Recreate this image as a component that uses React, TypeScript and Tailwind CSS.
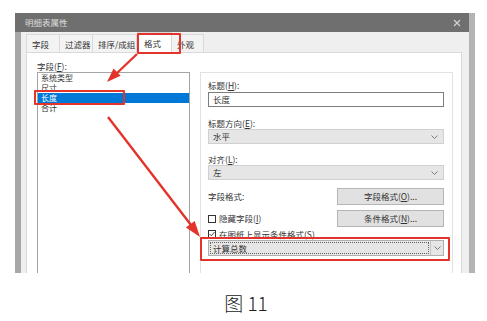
import type { ReactNode } from 'react';

function Chevron() {
  return (
    <svg width="7" height="4" viewBox="0 0 7 4" className="shrink-0">
      <path d="M0.5 0.5 L3.5 3.5 L6.5 0.5" fill="none" stroke="#7a7a7a" strokeWidth="1" />
    </svg>
  );
}

function Select({ value }: { value: string }) {
  return (
    <div className="h-[15px] border border-[#d0d0d0] bg-[#e6e6e6] flex items-center justify-between pl-[4px] pr-[5px]">
      <span>{value}</span>
      <Chevron />
    </div>
  );
}

function Label({ children }: { children: ReactNode }) {
  return <div className="h-[12px] leading-[12px]">{children}</div>;
}

function Button({ children }: { children: ReactNode }) {
  return (
    <div className="w-[107px] h-[17px] border border-[#b5b5b5] bg-[#e1e1e1] flex items-center justify-center">
      {children}
    </div>
  );
}

function Checkbox({ checked }: { checked?: boolean }) {
  return (
    <div className="w-[8px] h-[8px] border border-[#333] bg-white flex items-center justify-center mr-[3px]">
      {checked && (
        <svg width="6" height="6" viewBox="0 0 6 6">
          <path d="M0.5 3 L2.3 4.8 L5.5 1" fill="none" stroke="#333" strokeWidth="0.9" />
        </svg>
      )}
    </div>
  );
}

const tabs = [
  { label: '字段', w: 'w-[34px]' },
  { label: '过滤器', w: 'w-[33px]' },
  { label: '排序/成组', w: 'w-[44px]' },
  { label: '格式', w: 'w-[35px]', active: true },
  { label: '外观', w: 'w-[32px]' },
];

const fields = ['系统类型', '尺寸', '长度', '合计'];

export default function App() {
  return (
    <div className="relative w-[487px] h-[321px] bg-white overflow-hidden text-[8.5px] text-[#333] font-['Noto_Sans_CJK_SC','Noto_Sans',sans-serif]">
      {/* Dialog */}
      <div className="ml-[15px] mt-[13px] w-[460px] h-[260px] flex">
        <div className="w-[454px] flex flex-col">
          {/* Title bar */}
          <div className="h-[19px] bg-[#6f6f6f] flex items-center justify-between pl-[10px] pr-[8px] text-[#dedede]">
            <span>明细表属性</span>
            <svg width="8" height="8" viewBox="0 0 8 8">
              <path d="M1 1 L7 7 M7 1 L1 7" stroke="#d6d6d6" strokeWidth="1.1" />
            </svg>
          </div>
          <div className="flex-1 flex">
            <div className="w-[6px] bg-[#a7a7a7]" />
            <div className="flex-1 bg-[#efefef] pl-[5px] pr-[7px] flex flex-col">
              {/* Tabs */}
              <div className="h-[20px] flex items-end">
                {tabs.map((t) =>
                  t.active ? (
                    <div
                      key={t.label}
                      className={`${t.w} h-[21px] -mb-px bg-white border border-b-0 border-[#d9d9d9] pl-[6px] pt-[4px] leading-[12px] relative z-10`}
                    >
                      {t.label}
                    </div>
                  ) : (
                    <div
                      key={t.label}
                      className={`${t.w} h-[18px] bg-[#f3f3f3] border border-b-0 border-l-0 first:border-l border-[#d9d9d9] pl-[5px] pt-[3px] leading-[12px]`}
                    >
                      {t.label}
                    </div>
                  )
                )}
              </div>
              {/* Panel */}
              <div className="flex-1 bg-white border border-b-0 border-[#d9d9d9] flex pl-[10px] pt-[7px] overflow-hidden">
                <div className="flex flex-col">
                  <Label>
                    字段(<u>F</u>):
                  </Label>
                  <div className="w-[153px] flex-1 border border-b-0 border-[#a5a5a5]">
                    {fields.map((f) => (
                      <div
                        key={f}
                        className={`h-[10px] flex items-center overflow-hidden pl-[3px] text-[8px] leading-none ${f === '长度' ? 'bg-[#0078d7] text-white' : ''}`}
                      >
                        {f}
                      </div>
                    ))}
                  </div>
                </div>
                <div className="ml-[10px] mt-[12px] w-[253px] border border-b-0 border-[#e2e2e2] pl-[7px] pr-[8px] pt-[6px] flex flex-col">
                  <Label>
                    标题(<u>H</u>):
                  </Label>
                  <div className="mt-[1px] h-[15px] border border-[#7d7d7d] bg-white flex items-center pl-[4px]">
                    长度
                  </div>
                  <div className="mt-[10px]">
                    <Label>
                      标题方向(<u>E</u>):
                    </Label>
                  </div>
                  <Select value="水平" />
                  <div className="mt-[9px]">
                    <Label>
                      对齐(<u>L</u>):
                    </Label>
                  </div>
                  <Select value="左" />
                  <div className="mt-[8px] flex items-center justify-between">
                    <span>字段格式:</span>
                    <Button>
                      字段格式(<u>O</u>)...
                    </Button>
                  </div>
                  <div className="mt-[5px] flex items-center justify-between">
                    <div className="flex items-center">
                      <Checkbox />
                      <span>
                        隐藏字段(<u>I</u>)
                      </span>
                    </div>
                    <Button>
                      条件格式(<u>N</u>)...
                    </Button>
                  </div>
                  <div className="mt-[1px] h-[12px] flex items-center">
                    <Checkbox checked />
                    <span>在图纸上显示条件格式(S)</span>
                  </div>
                  <div className="h-[16px] border border-[#b0b0b0] bg-[#e6e6e6] flex items-stretch">
                    <div className="flex-1 m-[1px] border border-dotted border-[#666] flex items-center pl-[2px]">
                      计算总数
                    </div>
                    <div className="w-[13px] border-l border-[#c4c4c4] flex items-center justify-center">
                      <Chevron />
                    </div>
                  </div>
                </div>
              </div>
            </div>
          </div>
        </div>
        <div className="w-[6px] bg-[#b4b4b4]" />
      </div>

      {/* Caption */}
      <div className="mt-[19px] pl-[5px] text-center text-[19px] leading-[22px] font-light text-[#222]">图 11</div>

      {/* Red highlight boxes */}
      <div className="absolute left-[137px] top-[33px] w-[44px] h-[21px] border-2 border-[#e3342b] rounded-[1px] z-20" />
      <div className="absolute left-[34px] top-[90px] w-[91px] h-[15px] border-2 border-[#e3342b] rounded-[1px]" />
      <div className="absolute left-[200px] top-[237px] w-[250px] h-[24px] border-2 border-[#e3342b] rounded-[1px]" />

      {/* Arrows */}
      <svg className="absolute left-0 top-0 z-30" width="487" height="321" viewBox="0 0 487 321">
        <line x1="137" y1="54" x2="116" y2="74" stroke="#e3342b" strokeWidth="2.4" />
        <polygon points="107,82 120.6,75.8 113.6,68.6" fill="#e3342b" />
        <line x1="108" y1="117" x2="191" y2="225" stroke="#e3342b" strokeWidth="2.4" />
        <polygon points="200,237 194.7,221 185.9,227.6" fill="#e3342b" />
      </svg>
    </div>
  );
}
